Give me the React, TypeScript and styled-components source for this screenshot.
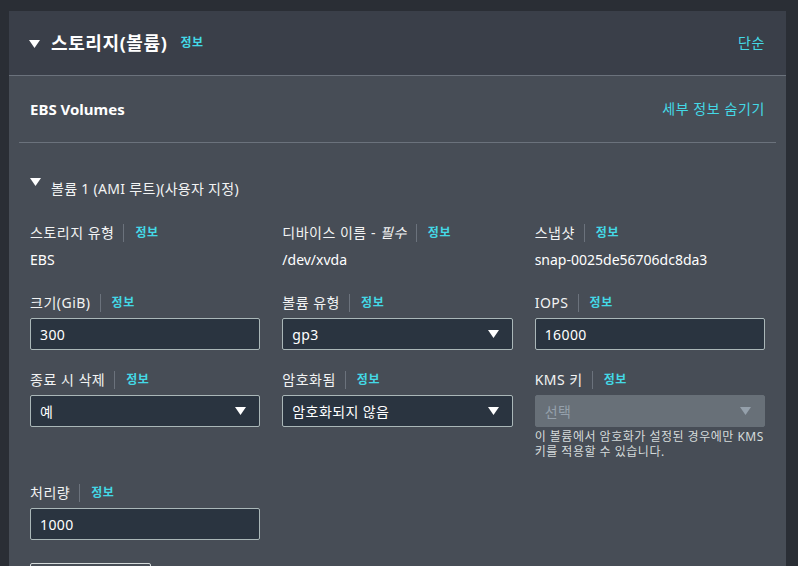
import React from "react";
import styled, { createGlobalStyle } from "styled-components";

const GlobalStyle = createGlobalStyle`
  body {
    margin: 0;
    background: #2a2e35;
    font-family: "Noto Sans", "Noto Sans CJK KR", sans-serif;
    color: #f2f3f3;
  }
`;

type FieldProps = {
  label: React.ReactNode;
  children: React.ReactNode;
};

const Field = ({ label, children }: FieldProps) => (
  <FieldBox>
    <LabelRow>
      <LabelText>{label}</LabelText>
      <Divider />
      <InfoLink>정보</InfoLink>
    </LabelRow>
    {children}
  </FieldBox>
);

const Caret = ({ muted }: { muted?: boolean }) => (
  <svg width="11" height="8" viewBox="0 0 11 8">
    <path d="M0 0 H11 L5.5 8 Z" fill={muted ? "#95a0ab" : "#ffffff"} />
  </svg>
);

export default function App() {
  return (
    <>
      <GlobalStyle />
      <Panel>
        <PanelHeader>
          <HeaderLeft>
            <Caret />
            <Title>스토리지(볼륨)</Title>
            <InfoLink>정보</InfoLink>
          </HeaderLeft>
          <PlainLink>단순</PlainLink>
        </PanelHeader>
        <PanelBody>
          <SectionHeader>
            <SectionTitle>EBS Volumes</SectionTitle>
            <PlainLink>세부 정보 숨기기</PlainLink>
          </SectionHeader>
          <VolumeBlock>
            <VolumeToggle>
              <Caret />
              <VolumeTitle>볼륨 1 (AMI 루트)(사용자 지정)</VolumeTitle>
            </VolumeToggle>
            <FieldGrid>
              <Field label="스토리지 유형">
                <Value>EBS</Value>
              </Field>
              <Field
                label={
                  <>
                    디바이스 이름 - <em>필수</em>
                  </>
                }
              >
                <Value>/dev/xvda</Value>
              </Field>
              <Field label="스냅샷">
                <Value>snap-0025de56706dc8da3</Value>
              </Field>

              <Field label="크기(GiB)">
                <InputBox>300</InputBox>
              </Field>
              <Field label="볼륨 유형">
                <InputBox>
                  gp3
                  <Caret />
                </InputBox>
              </Field>
              <Field label="IOPS">
                <InputBox>16000</InputBox>
              </Field>

              <Field label="종료 시 삭제">
                <InputBox>
                  예
                  <Caret />
                </InputBox>
              </Field>
              <Field label="암호화됨">
                <InputBox>
                  암호화되지 않음
                  <Caret />
                </InputBox>
              </Field>
              <Field label="KMS 키">
                <InputBox $disabled>
                  선택
                  <Caret muted />
                </InputBox>
                <HelpText>
                  이 볼륨에서 암호화가 설정된 경우에만 KMS 키를 적용할 수
                  있습니다.
                </HelpText>
              </Field>

              <Field label="처리량">
                <InputBox>1000</InputBox>
              </Field>
            </FieldGrid>
            <AddButton>새 볼륨 추가</AddButton>
          </VolumeBlock>
        </PanelBody>
      </Panel>
    </>
  );
}

const Panel = styled.div`
  margin: 11px 12px 0 9px;
  background: #474d56;
  min-height: 560px;
`;

const PanelHeader = styled.div`
  height: 64px;
  background: #3a3f49;
  border-bottom: 1px solid #6b727c;
  display: flex;
  align-items: center;
  justify-content: space-between;
  padding: 0 21px 0 20px;
`;

const HeaderLeft = styled.div`
  display: flex;
  align-items: center;
  svg {
    margin-right: 11px;
    margin-top: 1px;
  }
`;

const Title = styled.h2`
  margin: 0 13px 0 0;
  font-size: 18px;
  font-weight: 700;
  color: #ffffff;
  letter-spacing: 0.6px;
  line-height: 24px;
`;

const InfoLink = styled.span`
  font-size: 12px;
  font-weight: 700;
  color: #44d9e6;
  line-height: 16px;
  letter-spacing: 0.6px;
`;

const PlainLink = styled.span`
  font-size: 14px;
  color: #44d9e6;
  line-height: 20px;
  letter-spacing: 0.6px;
`;

const PanelBody = styled.div`
  padding: 0 10px;
`;

const SectionHeader = styled.div`
  height: 66px;
  display: flex;
  align-items: center;
  justify-content: space-between;
  padding: 0 11px;
  border-bottom: 1px solid #6b727c;
`;

const SectionTitle = styled.h3`
  margin: 0;
  font-size: 15px;
  font-weight: 700;
  color: #ffffff;
`;

const VolumeBlock = styled.div`
  padding: 35px 11px 0;
`;

const VolumeToggle = styled.div`
  display: flex;
  align-items: flex-start;
  gap: 10px;
  height: 20px;
`;

const VolumeTitle = styled.span`
  font-size: 14px;
  line-height: 20px;
  margin-top: 1px;
  letter-spacing: 0.3px;
  color: #f2f3f3;
`;

const FieldGrid = styled.div`
  display: grid;
  grid-template-columns: repeat(3, 1fr);
  column-gap: 22px;
  row-gap: 20px;
  margin-top: 25px;
`;

const FieldBox = styled.div`
  display: flex;
  flex-direction: column;
`;

const LabelRow = styled.div`
  display: flex;
  align-items: center;
  height: 20px;
  margin-bottom: 5px;
`;

const LabelText = styled.span`
  font-size: 14px;
  line-height: 20px;
  letter-spacing: 0.5px;
  color: #f2f3f3;
  em {
    font-style: italic;
  }
`;

const Divider = styled.span`
  width: 1px;
  height: 18px;
  background: #6b727c;
  margin: 0 11px 0 9px;
`;

const Value = styled.div`
  font-size: 14px;
  line-height: 20px;
  margin: 2px 0 3px;
  color: #ffffff;
`;

const InputBox = styled.div<{ $disabled?: boolean }>`
  height: 32px;
  box-sizing: border-box;
  border: 1px solid ${(p) => (p.$disabled ? "#687078" : "#aab7b8")};
  border-radius: 2px;
  background: ${(p) => (p.$disabled ? "#687078" : "#2a3440")};
  color: ${(p) => (p.$disabled ? "#95a0ab" : "#ffffff")};
  font-size: 14px;
  letter-spacing: 0.4px;
  padding: 0 13px 0 9px;
  display: flex;
  align-items: center;
  justify-content: space-between;
`;

const HelpText = styled.p`
  margin: 2px 0 4px;
  font-size: 12px;
  line-height: 15px;
  letter-spacing: 0.5px;
  color: #d5dbdb;
`;

const AddButton = styled.button`
  margin-top: 23px;
  width: 121px;
  height: 32px;
  border: 1px solid #d5dbdb;
  border-radius: 2px;
  background: #474d56;
  color: #d5dbdb;
  font-family: inherit;
  font-size: 14px;
  font-weight: 700;
`;
